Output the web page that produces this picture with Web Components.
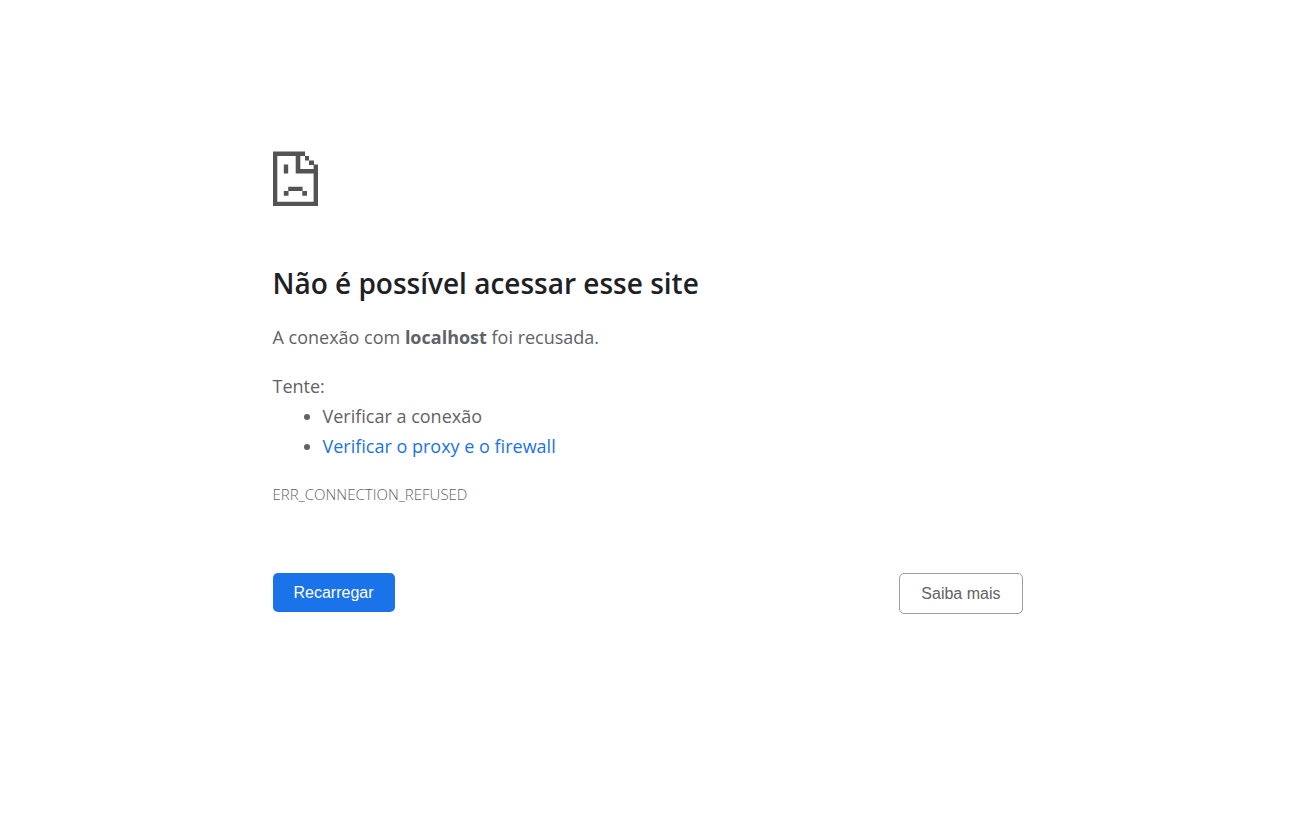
<!DOCTYPE html>
<html lang="pt-BR">
<head>
<meta charset="utf-8">
<meta name="viewport" content="width=device-width, initial-scale=1">
<title>localhost</title>
<style>
body { margin: 0; background: #fff; color: #5f6368; font-family: "Segoe UI", "Open Sans", sans-serif; font-size: 18px; font-weight: 400; line-height: 30px; }
</style>
</head>
<body>
<error-page>
  <sad-page-icon slot="icon"></sad-page-icon>
  <error-message slot="message" code="ERR_CONNECTION_REFUSED" host="localhost"></error-message>
  <action-button slot="actions" variant="primary">Recarregar</action-button>
  <action-button slot="actions">Saiba mais</action-button>
</error-page>
<script>
const define = (name, html, setup) => {
  const template = document.createElement('template');
  template.innerHTML = html;
  customElements.define(name, class extends HTMLElement {
    constructor() {
      super();
      this.attachShadow({ mode: 'open' }).append(template.content.cloneNode(true));
    }
    connectedCallback() { if (setup) setup(this, this.shadowRoot); }
  });
};

define('error-page', `
<style>
:host { display: block; box-sizing: border-box; max-width: 750px; margin: 0 auto; padding-top: 152px; }
footer { display: flex; flex-wrap: wrap; justify-content: space-between; align-items: flex-start; gap: 16px; margin-top: 65px; }
</style>
<main><slot name="icon"></slot><slot name="message"></slot></main>
<footer><slot name="actions"></slot></footer>`);

define('sad-page-icon', `
<style>
:host { display: block; margin-bottom: 57px; }
svg { display: block; width: 45px; height: 54px; fill: #535353; overflow: visible; }
</style>
<svg viewBox="0 0 45 54" aria-hidden="true">
<path fill-rule="evenodd" d="M0 -.4H32V4H36V8.6H41V12.6H45V54H0ZM4.3 4V49.7H40.6V21.6H22.7V4ZM27.3 4V17H40.6V13H36V8.6H32V4Z"/>
<path d="M10.8 12.6H15.2V21.6H10.8ZM15.2 34.7H29.6V39H15.2ZM10.8 39H15.5V43.7H10.8ZM29.3 39H34V43.7H29.3Z"/>
</svg>`);

define('error-message', `
<style>
:host { display: block; }
h1 { margin: 0 0 19px; color: #202124; font-size: 28px; font-weight: 600; line-height: 40px; }
p { margin: 0; }
strong { font-weight: 700; }
.list { margin-top: 19px; }
ul { margin: 0; padding-left: 50px; }
a { color: #1a73e8; text-decoration: none; }
.code { margin-top: 19px; font-size: 15px; font-weight: 300; line-height: 28px; }
</style>
<h1>Não é possível acessar esse site</h1>
<p>A conexão com <strong></strong> foi recusada.</p>
<div class="list"><p>Tente:</p>
<ul><li>Verificar a conexão</li><li><a href="#proxy">Verificar o proxy e o firewall</a></li></ul></div>
<div class="code"></div>`, (host, root) => {
  root.querySelector('strong').textContent = host.getAttribute('host');
  root.querySelector('.code').textContent = host.getAttribute('code');
});

define('action-button', `
<style>
:host { display: block; }
button { display: block; margin: 0; padding: 10px 21px; border: 1px solid #9aa0a6; border-radius: 5px; background: #fff; color: #5f6368; font: 16px/19px Arial, "Liberation Sans", sans-serif; cursor: pointer; }
:host([variant="primary"]) button { border: 0; background: #1a73e8; color: #fff; }
</style>
<button type="button"><slot></slot></button>`);
</script>
</body>
</html>
